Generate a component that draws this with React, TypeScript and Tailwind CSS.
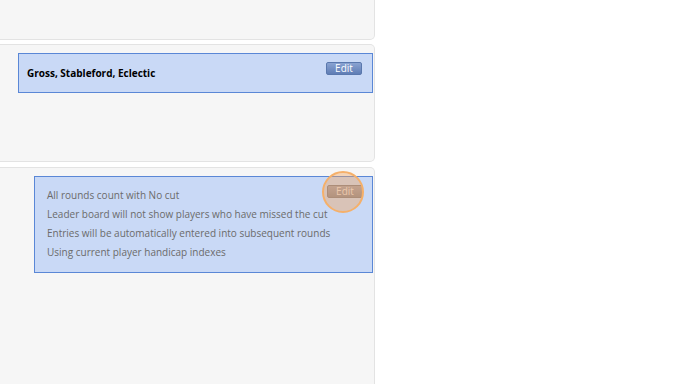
import type { ReactNode } from 'react';

const font = { fontFamily: '"Open Sans", "Noto Sans", sans-serif' };

function Card({ className, children }: { className: string; children?: ReactNode }) {
  return (
    <div className={`rounded-r-[5px] border border-l-0 border-[#e3e3e3] bg-[#f6f6f6] ${className}`}>{children}</div>
  );
}

function EditButton({ muted }: { muted?: boolean }) {
  return (
    <button
      className={
        muted
          ? 'block h-[13px] w-[36px] rounded-[2px] border border-[#7d7f8c] bg-gradient-to-b from-[#a3a2b0] to-[#8a8996] text-[10px] leading-[11px] text-[#e8e0e0]'
          : 'block h-[13px] w-[36px] rounded-[2px] border border-[#5a78ad] bg-gradient-to-b from-[#8aa3d1] to-[#5f7db5] text-[10px] leading-[11px] text-white'
      }
    >
      Edit
    </button>
  );
}

const rules = [
  'All rounds count with No cut',
  'Leader board will not show players who have missed the cut',
  'Entries will be automatically entered into subsequent rounds',
  'Using current player handicap indexes',
];

export default function App() {
  return (
    <div className="h-[384px] w-[688px] overflow-hidden bg-white" style={font}>
      <div className="flex w-[375px] flex-col">
        <Card className="-mt-[10px] h-[50px]" />
        <Card className="mt-[4px] h-[118px] pl-[18px] pr-[1px] pt-[8px]">
          <div className="relative flex h-[40px] items-start border border-[#5a87d6] bg-[#c9d9f6] pl-[8px]">
            <span className="mt-[11px] text-[10px] leading-[16px] font-bold text-black">Gross, Stableford, Eclectic</span>
            <div className="absolute right-[10px] top-[8px]">
              <EditButton />
            </div>
          </div>
        </Card>
        <Card className="mt-[5px] h-[230px] pl-[34px] pr-[1px] pt-[8px]">
          <div className="relative h-[97px] border border-[#5a87d6] bg-[#c9d9f6] pl-[12px] pt-[10px]">
            <div className="flex flex-col gap-[3px] text-[10px] leading-[16px] text-[#6b6b6b]">
              {rules.map((r) => (
                <span key={r}>{r}</span>
              ))}
            </div>
            <div className="absolute right-[9px] top-[8px]">
              <EditButton muted />
            </div>
            <div className="absolute right-[8px] top-[-6px] h-[42px] w-[42px] rounded-full border-2 border-[#f5b06a] bg-[#f3a35a]/40" />
          </div>
        </Card>
      </div>
    </div>
  );
}
